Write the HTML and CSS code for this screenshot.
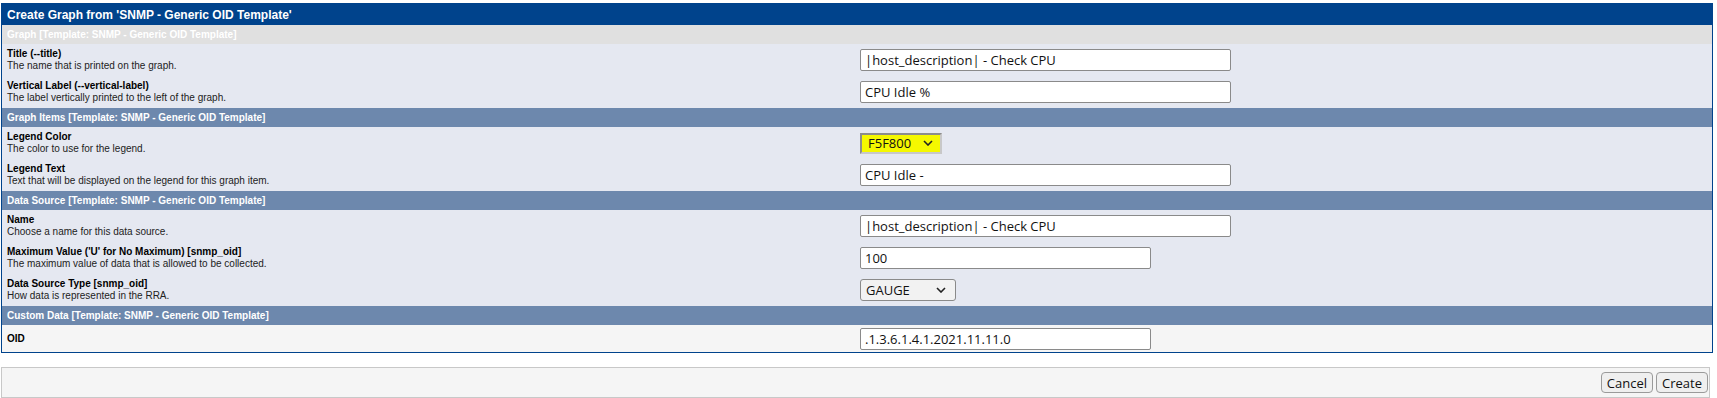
FILE: index.html
```html
<!DOCTYPE html>
<html lang="en">
<head>
    <meta charset="UTF-8">
    <title>Create Graph</title>
    <link rel="stylesheet" href="styles.css">
</head>
<body>

    <table class="form-table">
        <tr class="title-row">
            <td colspan="2">Create Graph from 'SNMP - Generic OID Template'</td>
        </tr>

        <!-- Graph -->
        <tr class="section disabled">
            <td colspan="2">Graph [Template: SNMP - Generic OID Template]</td>
        </tr>
        <tr class="field">
            <td class="label-cell">
                <div class="label">Title (--title)</div>
                <div class="desc">The name that is printed on the graph.</div>
            </td>
            <td class="input-cell"><input type="text" class="text-input wide" value="|host_description| - Check CPU"></td>
        </tr>
        <tr class="field">
            <td class="label-cell">
                <div class="label">Vertical Label (--vertical-label)</div>
                <div class="desc">The label vertically printed to the left of the graph.</div>
            </td>
            <td class="input-cell"><input type="text" class="text-input wide" value="CPU Idle %"></td>
        </tr>

        <!-- Graph Items -->
        <tr class="section">
            <td colspan="2">Graph Items [Template: SNMP - Generic OID Template]</td>
        </tr>
        <tr class="field">
            <td class="label-cell">
                <div class="label">Legend Color</div>
                <div class="desc">The color to use for the legend.</div>
            </td>
            <td class="input-cell">
                <div class="select color-select">
                    <span>F5F800</span>
                    <svg width="10" height="6" viewBox="0 0 10 6"><path d="M1 1l4 4 4-4" fill="none" stroke="#222" stroke-width="1.6"/></svg>
                </div>
            </td>
        </tr>
        <tr class="field">
            <td class="label-cell">
                <div class="label">Legend Text</div>
                <div class="desc">Text that will be displayed on the legend for this graph item.</div>
            </td>
            <td class="input-cell"><input type="text" class="text-input wide" value="CPU Idle -"></td>
        </tr>

        <!-- Data Source -->
        <tr class="section">
            <td colspan="2">Data Source [Template: SNMP - Generic OID Template]</td>
        </tr>
        <tr class="field">
            <td class="label-cell">
                <div class="label">Name</div>
                <div class="desc">Choose a name for this data source.</div>
            </td>
            <td class="input-cell"><input type="text" class="text-input wide" value="|host_description| - Check CPU"></td>
        </tr>
        <tr class="field">
            <td class="label-cell">
                <div class="label">Maximum Value ('U' for No Maximum) [snmp_oid]</div>
                <div class="desc">The maximum value of data that is allowed to be collected.</div>
            </td>
            <td class="input-cell"><input type="text" class="text-input narrow" value="100"></td>
        </tr>
        <tr class="field">
            <td class="label-cell">
                <div class="label">Data Source Type [snmp_oid]</div>
                <div class="desc">How data is represented in the RRA.</div>
            </td>
            <td class="input-cell">
                <div class="select type-select">
                    <span>GAUGE</span>
                    <svg width="10" height="6" viewBox="0 0 10 6"><path d="M1 1l4 4 4-4" fill="none" stroke="#222" stroke-width="1.6"/></svg>
                </div>
            </td>
        </tr>

        <!-- Custom Data -->
        <tr class="section">
            <td colspan="2">Custom Data [Template: SNMP - Generic OID Template]</td>
        </tr>
        <tr class="field plain">
            <td class="label-cell">
                <div class="label">OID</div>
            </td>
            <td class="input-cell"><input type="text" class="text-input narrow" value=".1.3.6.1.4.1.2021.11.11.0"></td>
        </tr>
    </table>

    <div class="button-bar">
        <button class="btn">Cancel</button>
        <button class="btn">Create</button>
    </div>

</body>
</html>
```

FILE: styles.css
```css
body {
    font-family: "Liberation Sans", Arial, sans-serif;
    font-size: 10px;
    color: #000;
    background-color: #fff;
    margin: 3px 0 0 1px;
}
.form-table {
    width: 1712px;
    border: 1px solid #00438c;
    border-collapse: collapse;
    border-spacing: 0;
}
.form-table td {
    padding: 0 5px;
    vertical-align: middle;
}
.form-table td.input-cell {
    padding-left: 3px;
}
.title-row td {
    background-color: #00438c;
    color: #fff;
    font-size: 12px;
    font-weight: bold;
    height: 20px;
    padding-top: 1px;
}
.section td {
    background-color: #6d88ad;
    color: #fff;
    font-weight: bold;
    height: 19px;
}
.section.disabled td {
    background-color: #e0e0e0;
}
.field td {
    background-color: #e5e8f1;
    height: 32px;
}
.field.plain td {
    background-color: #f5f5f5;
    height: 27px;
}
.label-cell {
    width: 50%;
}
.label {
    font-weight: bold;
    line-height: 12px;
}
.desc {
    color: #222;
    line-height: 12px;
}
.text-input {
    box-sizing: border-box;
    height: 22px;
    padding: 0 4px;
    border: 1px solid #8a8a8a;
    border-radius: 2px;
    background-color: #fff;
    font-family: "Open Sans", "DejaVu Sans", sans-serif;
    font-size: 13px;
    color: #111;
    display: block;
}
.text-input.wide {
    width: 371px;
}
.text-input.narrow {
    width: 291px;
}
.select {
    box-sizing: border-box;
    display: flex;
    align-items: center;
    justify-content: space-between;
    font-family: "Open Sans", "DejaVu Sans", sans-serif;
    font-size: 13px;
    color: #111;
}
.color-select {
    width: 82px;
    height: 21px;
    padding: 0 7px 0 6px;
    background-color: #f5f800;
    border: 2px solid #9a9a9a;
    border-color: #8c8c8c #c8c8c8 #c8c8c8 #8c8c8c;
}
.type-select {
    width: 96px;
    height: 22px;
    padding: 0 9px 0 5px;
    background-color: #f2f2f2;
    border: 1px solid #8a8a8a;
    border-radius: 3px;
}
.button-bar {
    box-sizing: border-box;
    width: 1709px;
    height: 31px;
    margin-top: 14px;
    border: 1px solid #c8c8c8;
    background-color: #f5f5f5;
    display: flex;
    justify-content: flex-end;
    align-items: center;
    gap: 3px;
    padding-right: 1px;
}
.btn {
    height: 21px;
    padding: 0 5px;
    font-family: "Open Sans", "DejaVu Sans", sans-serif;
    font-size: 13px;
    color: #111;
    background-color: #efefef;
    border: 1px solid #9a9a9a;
    border-radius: 4px;
    cursor: pointer;
}
```
